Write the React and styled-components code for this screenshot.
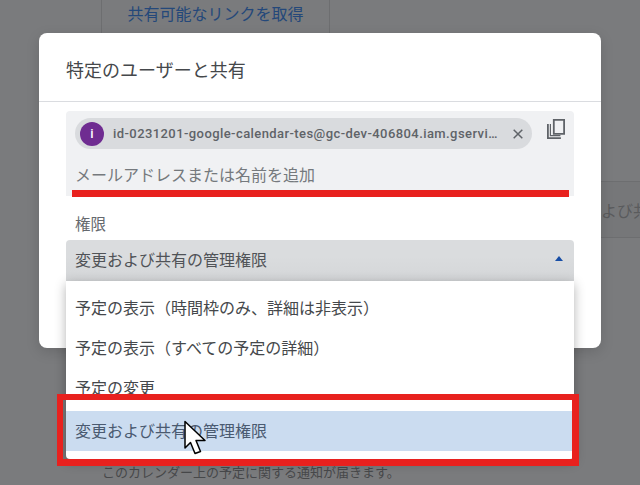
import React from 'react';
import styled, { createGlobalStyle } from 'styled-components';

const JP = `"Noto Sans CJK JP", "Roboto", "Liberation Sans", sans-serif`;

const GlobalStyle = createGlobalStyle`
  html, body { margin: 0; padding: 0; background: #7a7b7d; }
  body { font-family: ${JP}; }
`;

const Page = styled.div`
  position: relative;
  width: 640px;
  height: 485px;
  overflow: hidden;
  background: #7a7b7d;
  padding: 33px 39px 0;
  box-sizing: border-box;
`;

/* calendar settings page dimmed behind the dialog */
const Behind = styled.div`
  position: absolute;
  inset: 0;
  display: flex;
  flex-direction: column;
  align-items: flex-start;
  padding-left: 101px;
`;

const LinkButton = styled.div`
  width: 229px;
  height: 33px;
  flex: none;
  border: solid #6d6e70;
  border-width: 0 1px;
  padding-top: 3px;
  box-sizing: border-box;
  text-align: center;
  font-size: 16px;
  line-height: 20px;
  color: #24487a;
`;

const BehindSelect = styled.div`
  width: 55px;
  height: 57px;
  flex: none;
  margin: 148px 0 0 484px;
  border: solid #6d6e70;
  border-width: 1px 0;
  box-sizing: border-box;
  padding-top: 18px;
  font-size: 16px;
  line-height: 20px;
  white-space: nowrap;
  color: #5a5b5d;
  background: #767779;
`;

const BehindNote = styled.div`
  margin: 226px 0 0 1px;
  font-size: 13px;
  line-height: 16px;
  color: #47484a;
  white-space: nowrap;
`;

const Dialog = styled.div`
  position: relative;
  width: 562px;
  height: 315px;
  background: #fff;
  border-radius: 8px;
  box-shadow: 0 4px 14px rgba(0, 0, 0, 0.14);
`;

const DialogTitle = styled.div`
  height: 69px;
  padding: 24px 27px 0;
  box-sizing: border-box;
  border-bottom: 1px solid #dadce0;
  font-size: 18px;
  line-height: 24px;
  color: #45484b;
`;

const DialogBody = styled.div`
  padding: 9px 27px 0;
`;

const InviteField = styled.div`
  position: relative;
  height: 85px;
  background: #f0f1f3;
  border-radius: 4px 4px 0 0;
  padding: 7px 0 0 9px;
  box-sizing: border-box;
`;

const Chip = styled.div`
  display: flex;
  align-items: center;
  width: 457px;
  height: 31px;
  background: #d9dbde;
  border-radius: 16px;
  padding-left: 5px;
  box-sizing: border-box;
`;

const Avatar = styled.div`
  width: 24px;
  height: 24px;
  flex: none;
  border-radius: 50%;
  background: #6f2c91;
  color: #fff;
  display: flex;
  align-items: center;
  justify-content: center;
  font: 500 13px Roboto, sans-serif;
`;

const ChipText = styled.span`
  margin-left: 9px;
  width: 386px;
  flex: none;
  overflow: hidden;
  white-space: nowrap;
  text-overflow: ellipsis;
  font: 500 13px/16px Roboto, sans-serif;
  letter-spacing: 0.42px;
  color: #5f6368;
`;

const ChipClose = styled.svg`
  width: 10px;
  height: 10px;
  margin-left: 14px;
  flex: none;
`;

const CopyIcon = styled.svg`
  position: absolute;
  right: 9px;
  top: 8px;
  width: 18px;
  height: 20px;
`;

const AddInput = styled.div`
  margin-top: 13px;
  font-size: 16px;
  line-height: 24px;
  color: #75797d;
`;

/* hand-drawn marker from the screenshot's author, sits over the field */
const RedLine = styled.div`
  position: absolute;
  left: 6px;
  right: 5px;
  bottom: -1px;
  height: 7px;
  background: #e8211e;
`;

const FieldLabel = styled.div`
  margin: 17px 0 0 9px;
  font-size: 15.5px;
  line-height: 20px;
  color: #65696e;
`;

const SelectBox = styled.div`
  position: relative;
  margin-top: 7px;
  height: 41px;
  display: flex;
  align-items: center;
  justify-content: space-between;
  padding: 0 11px 4px 9px;
  box-sizing: border-box;
  background: linear-gradient(#dadcde 40%, #d4d6d8);
  border-radius: 4px 4px 0 0;
  font-size: 16px;
  color: #505357;
`;

const Caret = styled.span`
  width: 0;
  height: 0;
  border-left: 4.5px solid transparent;
  border-right: 4.5px solid transparent;
  border-bottom: 5px solid #174ea6;
`;

const Menu = styled.ul`
  position: absolute;
  left: 0;
  right: 0;
  top: 41px;
  height: 178px;
  margin: 0;
  padding: 7px 0 0;
  box-sizing: border-box;
  list-style: none;
  background: #fff;
  border-radius: 0 0 4px 4px;
  box-shadow: 0 3px 12px rgba(0, 0, 0, 0.3);
`;

const MenuItem = styled.li`
  position: relative;
  height: 40px;
  display: flex;
  align-items: center;
  padding: 0 0 2px 9px;
  box-sizing: border-box;
  margin-top: ${props => (props.$active ? '3px' : 0)};
  font-size: 16px;
  white-space: nowrap;
  color: ${props => (props.$active ? '#4a5a70' : '#45484b')};
  background: ${props => (props.$active ? '#cbdcf0' : 'transparent')};
`;

/* annotation frame round the highlighted option */
const RedFrame = styled.div`
  position: absolute;
  left: -9px;
  right: -5px;
  top: -17px;
  height: 72px;
  border: solid #e8211e;
  border-width: 6px 7px 7px 6px;
  box-sizing: border-box;
`;

const Cursor = styled.svg`
  position: absolute;
  left: 118px;
  top: 9px;
  width: 22px;
  height: 36px;
`;

const App = () => (
  <>
    <GlobalStyle />
    <Page>
      <Behind>
        <LinkButton>共有可能なリンクを取得</LinkButton>
        <BehindSelect>および共有</BehindSelect>
        <BehindNote>このカレンダー上の予定に関する通知が届きます。</BehindNote>
      </Behind>
      <Dialog>
        <DialogTitle>特定のユーザーと共有</DialogTitle>
        <DialogBody>
          <InviteField>
            <Chip>
              <Avatar>i</Avatar>
              <ChipText>id-0231201-google-calendar-tes@gc-dev-406804.iam.gserviceaccount.com</ChipText>
              <ChipClose viewBox="0 0 10 10">
                <path d="M.7.7l8.600 8.600M9.300.7L.7 9.300" stroke="#5f6368" strokeWidth="1.500" fill="none" />
              </ChipClose>
            </Chip>
            <CopyIcon viewBox="0 0 18 20">
              <path
                d="M6.800.9h10.300v14H6.800zM.9 5v14.100h13"
                stroke="#5f6368"
                strokeWidth="1.800"
                fill="none"
              />
              <path d="M3.400 5v11.600h10" stroke="#5f6368" strokeWidth="1.200" fill="none" />
            </CopyIcon>
            <AddInput>メールアドレスまたは名前を追加</AddInput>
            <RedLine />
          </InviteField>
          <FieldLabel>権限</FieldLabel>
          <SelectBox>
            変更および共有の管理権限
            <Caret />
            <Menu>
              <MenuItem>予定の表示（時間枠のみ、詳細は非表示）</MenuItem>
              <MenuItem>予定の表示（すべての予定の詳細）</MenuItem>
              <MenuItem>予定の変更</MenuItem>
              <MenuItem $active>
                変更および共有の管理権限
                <RedFrame />
                <Cursor viewBox="0 0 22 36">
                  <path
                    d="M1 1.500V28l5.500-5.500L11 33.500l5.500-2L12 20.500h9z"
                    fill="#fff"
                    stroke="#000"
                    strokeWidth="1.500"
                    strokeLinejoin="round"
                  />
                </Cursor>
              </MenuItem>
            </Menu>
          </SelectBox>
        </DialogBody>
      </Dialog>
    </Page>
  </>
);

export default App;
